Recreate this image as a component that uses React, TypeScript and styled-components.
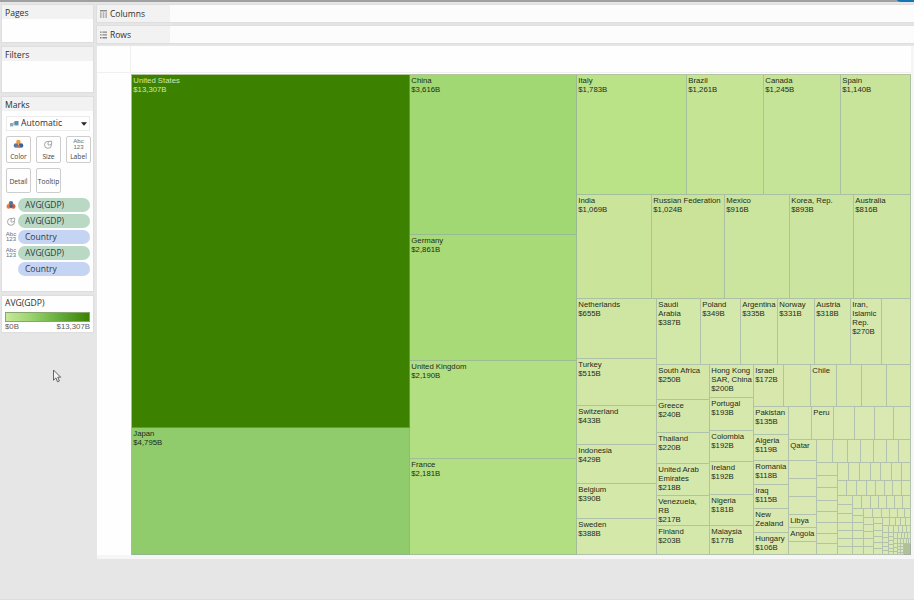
import React from "react";
import styled, { createGlobalStyle, css } from "styled-components";

const GlobalStyle = createGlobalStyle`
  *, *::before, *::after { box-sizing: border-box; }
  html, body { margin: 0; height: 100%; overflow: hidden; background: #e6e6e6; }
  body { font-family: "Open Sans", "Noto Sans", sans-serif; color: #2e2e2e; }
`;

/* ---------- treemap data ---------- */

type Leaf = { kind: "leaf"; name?: string; value?: string; color: string };
type Split = { kind: "row" | "col"; sizes: number[]; items: Node[]; };
type Node = Leaf | Split;

const leaf = (name: string, value: string, color: string): Leaf => ({
  kind: "leaf",
  name,
  value,
  color,
});
const blank = (color = "#dae9b2"): Leaf => ({ kind: "leaf", color });

/* Parts are laid between a start edge and the listed end edges. */
const split =
  (kind: "row" | "col") =>
  (start: number, ends: number[], items: Node[] = []): Split => ({
    kind,
    sizes: ends.map((end, i) => end - (i ? ends[i - 1] : start)),
    items: ends.map((_, i) => items[i] ?? blank()),
  });
const row = split("row");
const col = split("col");

const tail = row(853, [864, 911], [
  col(509, [516, 523, 531, 539, 547, 555]),
  col(509, [518, 555], [
    row(864, [873, 882, 890, 898, 905, 911]),
    row(864, [874, 883, 911], [
      col(518, [525, 532, 539, 547, 555]),
      col(518, [524, 531, 537, 543, 549, 555]),
      col(518, [526, 533, 555], [
        row(883, [890, 896, 901, 906, 911]),
        row(883, [889, 894, 899, 903, 907, 911]),
        row(883, [889, 894, 911], [
          col(533, [538, 543, 547, 551, 555]),
          col(533, [537, 541, 545, 549, 552, 555]),
          col(533, [539, 544, 555], [
            row(894, [898, 902, 905, 908, 911]),
            row(894, [898, 901, 904, 907, 909, 911]),
            row(894, [898, 901, 904, 911], [
              col(544, [548, 552, 555]),
              col(544, [547, 550, 553, 555]),
              col(544, [547, 550, 553, 555]),
              blank("#b3bf98"),
            ]),
          ]),
        ]),
      ]),
    ]),
  ]),
]);

const small = row(789, [817, 911], [
  col(440, [461, 479, 497, 515, 528, 542, 555], [
    leaf("Qatar", "", "#d9e8af"), blank(), blank(), blank(),
    leaf("Libya", "", "#dae9b2"), leaf("Angola", "", "#dae9b2"), blank(),
  ]),
  col(440, [463, 555], [
    row(817, [833, 848, 861, 874, 887, 899, 911]),
    row(817, [838, 911], [
      col(463, [476, 488, 501, 512, 523, 534, 544, 555]),
      col(463, [481, 496, 555], [
        row(838, [849, 860, 871, 881, 892, 902, 911]),
        row(838, [847, 857, 867, 876, 885, 893, 902, 911]),
        row(838, [853, 911], [
          col(496, [505, 514, 523, 531, 539, 547, 555]),
          col(496, [509, 555], [
            row(853, [862, 871, 879, 887, 895, 903, 911]),
            tail,
          ]),
        ]),
      ]),
    ]),
  ]),
]);

const third = row(657, [710, 754, 911], [
  col(365, [400, 433, 464, 496, 526, 555], [
    leaf("South Africa", "$250B", "#d4e7a9"),
    leaf("Greece", "$240B", "#d4e7aa"),
    leaf("Thailand", "$220B", "#d5e8ac"),
    leaf("United Arab\nEmirates", "$218B", "#d5e8ac"),
    leaf("Venezuela,\nRB", "$217B", "#d5e8ac"),
    leaf("Finland", "$203B", "#d5e8ac"),
  ]),
  col(365, [398, 431, 462, 495, 526, 555], [
    leaf("Hong Kong\nSAR, China", "$200B", "#d6e8ac"),
    leaf("Portugal", "$193B", "#d6e8ac"),
    leaf("Colombia", "$192B", "#d6e8ac"),
    leaf("Ireland", "$192B", "#d6e8ac"),
    leaf("Nigeria", "$181B", "#d6e8ac"),
    leaf("Malaysia", "$177B", "#d6e8ac"),
  ]),
  col(365, [407, 555], [
    row(754, [784, 811, 837, 862, 887, 911], [
      leaf("Israel", "$172B", "#d8e8ad"), blank("#d8e8ad"),
      leaf("Chile", "", "#d8e8ad"), blank("#d8e8ad"),
      blank("#d8e8ad"), blank("#d8e8ad"),
    ]),
    row(754, [789, 911], [
      col(407, [435, 461, 485, 509, 533, 555], [
        leaf("Pakistan", "$135B", "#d8e8ae"),
        leaf("Algeria", "$119B", "#d8e8ae"),
        leaf("Romania", "$118B", "#d8e8ae"),
        leaf("Iraq", "$115B", "#d8e8ae"),
        leaf("New\nZealand", "", "#d8e8ae"),
        leaf("Hungary", "$106B", "#d8e8ae"),
      ]),
      col(407, [440, 555], [
        row(789, [812, 834, 855, 875, 894, 911], [
          blank(), leaf("Peru", "", "#dae9b2"),
        ]),
        small,
      ]),
    ]),
  ]),
]);

const treemap = row(132, [410, 577, 911], [
  col(75, [428, 555], [
    leaf("United States", "$13,307B", "#3c8200"),
    leaf("Japan", "$4,795B", "#91cc6c"),
  ]),
  col(75, [235, 361, 459, 555], [
    leaf("China", "$3,616B", "#a1d873"),
    leaf("Germany", "$2,861B", "#a8db78"),
    leaf("United Kingdom", "$2,190B", "#b3df83"),
    leaf("France", "$2,181B", "#b3df83"),
  ]),
  col(75, [195, 299, 555], [
    row(577, [687, 764, 841, 911], [
      leaf("Italy", "$1,783B", "#bae287"),
      leaf("Brazil", "$1,261B", "#c5e594"),
      leaf("Canada", "$1,245B", "#c6e497"),
      leaf("Spain", "$1,140B", "#c8e49a"),
    ]),
    row(577, [652, 725, 790, 854, 911], [
      leaf("India", "$1,069B", "#cae49a"),
      leaf("Russian Federation", "$1,024B", "#cbe399"),
      leaf("Mexico", "$916B", "#cbe59e"),
      leaf("Korea, Rep.", "$893B", "#cbe5a0"),
      leaf("Australia", "$816B", "#cce6a2"),
    ]),
    row(577, [657, 911], [
      col(299, [359, 406, 445, 484, 519, 555], [
        leaf("Netherlands", "$655B", "#cfe6a2"),
        leaf("Turkey", "$515B", "#d2e7a6"),
        leaf("Switzerland", "$433B", "#d3e7a8"),
        leaf("Indonesia", "$429B", "#d3e7a8"),
        leaf("Belgium", "$390B", "#d4e8aa"),
        leaf("Sweden", "$388B", "#d4e8aa"),
      ]),
      col(299, [365, 555], [
        row(657, [701, 741, 778, 815, 851, 882, 911], [
          leaf("Saudi\nArabia", "$387B", "#d2e8a9"),
          leaf("Poland", "$349B", "#d3e8aa"),
          leaf("Argentina", "$335B", "#d4e8ab"),
          leaf("Norway", "$331B", "#d4e8ab"),
          leaf("Austria", "$318B", "#d4e8ac"),
          leaf("Iran,\nIslamic\nRep.", "$270B", "#d6e8ae"),
          blank("#d6e8ae"),
        ]),
        third,
      ]),
    ]),
  ]),
]);

/* ---------- treemap parts ---------- */

const Group = styled.div<{ $kind: "row" | "col"; $size: number }>`
  flex: ${(p) => p.$size} 1 0;
  min-width: 0;
  min-height: 0;
  display: flex;
  flex-direction: ${(p) => (p.$kind === "row" ? "row" : "column")};
`;

const Cell = styled.div<{ $size: number; $color: string; $dark: boolean }>`
  flex: ${(p) => p.$size} 1 0;
  min-width: 0;
  min-height: 0;
  display: flex;
  flex-direction: column;
  overflow: hidden;
  background: ${(p) => p.$color};
  box-shadow: inset -1px -1px 0 rgba(146, 162, 172, 0.55);
  color: ${(p) => (p.$dark ? "#cfe8b4" : "#1f2b17")};
  font: 7.75px/8.9px "Liberation Sans", Arial, sans-serif;
`;

const CellText = styled.div`
  flex: none;
  padding: 2px 0 0 1.3px;
  white-space: pre;
`;

const TreemapNode = ({ node, size }: { node: Node; size: number }) => {
  if (node.kind === "leaf") {
    return (
      <Cell $size={size} $color={node.color} $dark={node.name === "United States"}>
        {node.name && (
          <CellText>{node.value ? `${node.name}\n${node.value}` : node.name}</CellText>
        )}
      </Cell>
    );
  }
  return (
    <Group $kind={node.kind} $size={size}>
      {node.items.map((item, i) => (
        <TreemapNode key={i} node={item} size={node.sizes[i]} />
      ))}
    </Group>
  );
};

/* ---------- page parts ---------- */

const Page = styled.div`
  width: 914px;
  height: 600px;
  display: flex;
  flex-direction: column;
  background: #e6e6e6;
  border-bottom: 1px solid #dcdcdc;
`;

const TopStrip = styled.div`
  height: 2px;
  flex: none;
  display: flex;
  justify-content: flex-end;
  background: #9fa0a1;
`;

const TopAccent = styled.div`
  width: 17px;
  background: #1673b4;
  border-bottom-left-radius: 6px 2px;
`;

const Body = styled.div`
  flex: 1;
  min-height: 0;
  display: flex;
`;

const Sidebar = styled.aside`
  width: 97px;
  padding: 3px 4px 0 2px;
  display: flex;
  flex-direction: column;
  gap: 5px;
`;

const Card = styled.section<{ $height: number }>`
  height: ${(p) => p.$height}px;
  flex: none;
  background: #fefefe;
  box-shadow: 0 0 1px 1px #dedede;
`;

const CardTitle = styled.h2`
  margin: 0;
  height: 14px;
  padding-left: 3px;
  background: #f2f2f2;
  font-size: 8.6px;
  line-height: 16px;
  font-weight: 400;
`;

const MarkType = styled.div`
  width: 84px;
  height: 15px;
  margin: 5px 0 0 4px;
  padding: 0 2px 0 3px;
  display: flex;
  align-items: center;
  border: 1px solid #ececec;
  font-size: 8.6px;
  line-height: 13px;
`;

const MarkTypeLabel = styled.span`
  flex: 1;
  padding-left: 2px;
`;

const MarkButtons = styled.div`
  margin: 5px 0 0 4px;
  display: grid;
  grid-template-columns: repeat(3, 25px);
  grid-template-rows: 27px 25px;
  column-gap: 5px;
  row-gap: 5px;
`;

const MarkButton = styled.button<{ $plain?: boolean }>`
  padding: 2px 0 1px;
  display: flex;
  flex-direction: column;
  align-items: center;
  justify-content: ${(p) => (p.$plain ? "center" : "space-between")};
  border: 1px solid #cdcdcd;
  border-radius: 2px;
  background: #fefefe;
  color: #424242;
  font: 6.7px/9px "Open Sans", "Noto Sans", sans-serif;
  white-space: nowrap;
`;

const Pills = styled.div`
  margin: 5px 0 0 3px;
  display: flex;
  flex-direction: column;
  gap: 2px;
`;

const PillRow = styled.div`
  height: 14px;
  display: grid;
  grid-template-columns: 12px 72px;
  column-gap: 1px;
  align-items: center;
  justify-items: center;
`;

const Pill = styled.span<{ $measure?: boolean }>`
  justify-self: stretch;
  height: 14px;
  padding-left: 7px;
  border-radius: 7px;
  background: ${(p) => (p.$measure ? "#b9d9c5" : "#c5d4f2")};
  font-size: 8.5px;
  line-height: 14px;
  color: #2b3941;
`;

const LegendTitle = styled.div`
  padding: 1px 0 0 3px;
  height: 16px;
  font-size: 8.6px;
  line-height: 13px;
`;

const LegendBar = styled.div`
  margin: 0 3px;
  height: 10px;
  border: 1px solid #86a76b;
  background: linear-gradient(90deg, #c9e79b, #9ad36f 30%, #62ac3a 65%, #3c8200);
`;

const LegendScale = styled.div`
  padding: 0 3px;
  display: flex;
  justify-content: space-between;
  font: 7.8px/10px "Liberation Sans", Arial, sans-serif;
  color: #5c5c5c;
`;

const Main = styled.main`
  flex: 1;
  min-width: 0;
  display: flex;
  flex-direction: column;
`;

const shelf = css`
  height: 17px;
  flex: none;
  box-shadow: 0 0 1px 1px #dedede;
`;

const Shelf = styled.div`
  ${shelf}
  margin: 3px 0 1px;
  padding-left: 3px;
  display: flex;
  align-items: center;
  gap: 3px;
  background: linear-gradient(90deg, #f2f2f2 0 73px, #fcfcfc 73px);
  font-size: 8.5px;
  line-height: 17px;
`;

const View = styled.div`
  margin-top: 2px;
  height: 513px;
  padding: 0 3px 4px 0;
  display: grid;
  grid-template: 27px 1px 481px / 34px 780px;
  background: #fefefe;
  box-shadow: inset -3px -4px 0 #f6f6f6;
`;

const HeaderCell = styled.div`
  border-right: 1px solid #f0f0f0;
  border-bottom: 1px solid #f0f0f0;
`;

const HeaderRule = styled.div`
  border-bottom: 1px solid #f0f0f0;
`;

const Chart = styled.div`
  grid-column: 2;
  grid-row: 3;
  display: flex;
  border-left: 1px solid #a8bc98;
  border-top: 1px solid #b3c49f;
`;

const Pointer = styled.svg`
  position: absolute;
  left: 52px;
  top: 369px;
`;

/* ---------- icons ---------- */

const ColorIcon = () => (
  <svg width="11" height="11" viewBox="0 0 11 11">
    <circle cx="5.4" cy="3.1" r="2.3" fill="#ee9b3d" />
    <circle cx="3" cy="6.5" r="2.3" fill="#4f78a6" />
    <circle cx="8" cy="6.5" r="2.3" fill="#2f639b" />
    <path d="M3.5 7.2 5.5 5.4 7.5 7.2 6.8 8.8H4.3Z" fill="#d96442" />
  </svg>
);

const PillColorIcon = () => (
  <svg width="10" height="11" viewBox="0 0 10 11">
    <circle cx="5" cy="3.3" r="2.2" fill="#4d76a7" />
    <circle cx="2.8" cy="6.4" r="2.3" fill="#e77c3b" />
    <circle cx="7.2" cy="6.4" r="2.3" fill="#d75b39" />
    <path d="M3.4 4.8h3.2v2L5 8.3 3.4 7Z" fill="#376698" />
  </svg>
);

const SizeIcon = () => (
  <svg width="11" height="11" viewBox="0 0 11 11" fill="none" stroke="#929292" strokeWidth=".8">
    <circle cx="5" cy="5.8" r="3.5" />
    <path d="M5 5.8V4.2a2 2 0 0 1 2-2h1.7v1.7a2 2 0 0 1-2 2H5" fill="#fff" />
  </svg>
);

const IconText = styled.span`
  display: block;
  font: 6px/5.5px "Liberation Sans", Arial, sans-serif;
  text-align: center;
  color: #696971;
`;

const LabelIcon = () => (
  <IconText>
    Abc
    <br />
    123
  </IconText>
);

const AutoIcon = () => (
  <svg width="9" height="8" viewBox="0 0 9 8">
    <rect x="0" y="3" width="3.4" height="3.4" fill="#8fabc2" />
    <rect x="3" y="2" width="2" height="3" fill="#b7ccd9" />
    <rect x="4.5" y="1" width="4" height="4.4" fill="#5d8cae" />
  </svg>
);

const CaretIcon = () => (
  <svg width="6" height="4" viewBox="0 0 6 4">
    <path d="M0 .3h6L3 3.7Z" fill="#222" />
  </svg>
);

const ColumnsIcon = () => (
  <svg width="7" height="8" viewBox="0 0 7 8" fill="#8e8e8e">
    <rect width="7" height="1.5" />
    <path d="M0 2.3h1.6V8H0zM2.7 2.3h1.6V8H2.7zM5.4 2.3H7V8H5.4z" fillOpacity=".65" />
  </svg>
);

const RowsIcon = () => (
  <svg width="7" height="8" viewBox="0 0 7 8" fill="#858585">
    <path d="M0 .5h1.6v1.3H0zM0 3.3h1.6v1.3H0zM0 6.1h1.6v1.3H0zM2.4.5H7v1.3H2.4zM2.4 3.3H7v1.3H2.4zM2.4 6.1H7v1.3H2.4z" />
  </svg>
);

const pills = [
  { icon: <PillColorIcon />, label: "AVG(GDP)", measure: true },
  { icon: <SizeIcon />, label: "AVG(GDP)", measure: true },
  { icon: <LabelIcon />, label: "Country", measure: false },
  { icon: <LabelIcon />, label: "AVG(GDP)", measure: true },
  { icon: <span />, label: "Country", measure: false },
];

export default function App() {
  return (
    <Page>
      <GlobalStyle />
      <TopStrip>
        <TopAccent />
      </TopStrip>
      <Body>
        <Sidebar>
          <Card $height={37}>
            <CardTitle>Pages</CardTitle>
          </Card>
          <Card $height={45}>
            <CardTitle>Filters</CardTitle>
          </Card>
          <Card $height={194}>
            <CardTitle>Marks</CardTitle>
            <MarkType>
              <AutoIcon />
              <MarkTypeLabel>Automatic</MarkTypeLabel>
              <CaretIcon />
            </MarkType>
            <MarkButtons>
              <MarkButton><ColorIcon />Color</MarkButton>
              <MarkButton><SizeIcon />Size</MarkButton>
              <MarkButton><LabelIcon />Label</MarkButton>
              <MarkButton $plain>Detail</MarkButton>
              <MarkButton $plain>Tooltip</MarkButton>
            </MarkButtons>
            <Pills>
              {pills.map((p, i) => (
                <PillRow key={i}>
                  {p.icon}
                  <Pill $measure={p.measure}>{p.label}</Pill>
                </PillRow>
              ))}
            </Pills>
          </Card>
          <Card $height={36}>
            <LegendTitle>AVG(GDP)</LegendTitle>
            <LegendBar />
            <LegendScale>
              <span>$0B</span>
              <span>$13,307B</span>
            </LegendScale>
          </Card>
        </Sidebar>
        <Main>
          <Shelf><ColumnsIcon />Columns</Shelf>
          <Shelf><RowsIcon />Rows</Shelf>
          <View>
            <HeaderCell />
            <HeaderRule />
            <Chart>
              <TreemapNode node={treemap} size={1} />
            </Chart>
          </View>
        </Main>
      </Body>
      <Pointer width="10" height="15" viewBox="0 0 10 15">
        <path
          d="M1.5 1v10.2l2.4-2.3 1.6 3.9 1.9-.8-1.7-3.8h3Z"
          fill="#f4f4f4"
          stroke="#555"
          strokeWidth=".9"
        />
      </Pointer>
    </Page>
  );
}
